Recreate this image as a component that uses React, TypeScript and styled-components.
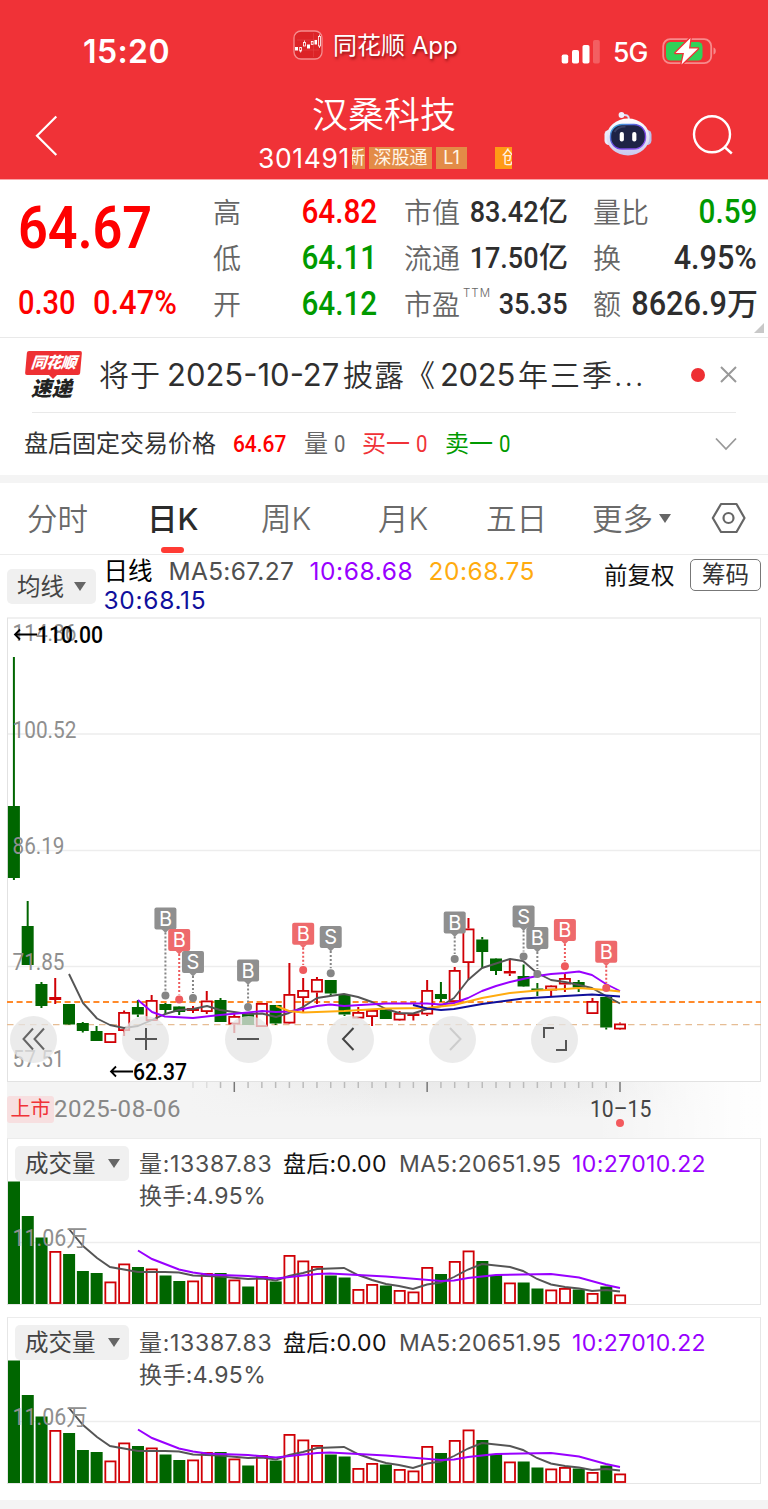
import React from 'react';
import styled, { createGlobalStyle } from 'styled-components';

const UI = `Inter, "Noto Sans CJK SC", sans-serif`;
const DIN = `Roboto, "Noto Sans CJK SC", sans-serif`;
const RED = '#fe0000';
const GREEN = '#009a00';
const PURPLE = '#9900ff';

const Global = createGlobalStyle`
  * { box-sizing: border-box; }
  body { margin: 0; background: #fff; font-family: ${UI}; color: #333; -webkit-font-smoothing: antialiased; }
`;

const Page = styled.div`width: 768px; height: 1509px; overflow: hidden; background: #fff; white-space: nowrap;`;

/* ---------- header ---------- */
const Header = styled.header`height: 180px; background: #f03237; color: #fff; border-bottom: 1px solid #f9a5a7;`;
const StatusBar = styled.div`height: 92px; display: grid; grid-template-columns: 293px 268px 1fr;`;
const Clock = styled.div`padding: 30px 0 0 83px; font: 600 32px/44px ${UI}; letter-spacing: 0.4px;`;
const AppMark = styled.div`padding-top: 29px; height: 60px; display: flex; align-items: center; gap: 10px;`;
const AppName = styled.span`margin-top: 2px; font-size: 24px; line-height: 30px; text-shadow: 1px 2px 3px rgba(90, 0, 0, 0.7);`;
const Signals = styled.div`padding-top: 37px; height: 66px; display: flex; align-items: center;`;
const Network = styled.span`font: 500 26.5px/28px ${UI}; margin: 1px 14px 0 13px; letter-spacing: -0.8px;`;
const NavBar = styled.div`height: 87px; display: grid; grid-template-columns: 258px 254px 92px 1fr;`;
const BackSlot = styled.div`padding: 23px 0 0 35px;`;
const TitleBlock = styled.div`display: flex; flex-direction: column; align-items: center; overflow: hidden;`;
const Title = styled.h1`margin: 2px 2px 0 0; font-weight: 350; font-size: 36px; line-height: 43px;`;
const CodeRow = styled.div`width: 254px; height: 26px; margin-top: 8px; display: flex; align-items: center;`;
const Code = styled.span`width: 94px; font-size: 26.5px; line-height: 26px; letter-spacing: 0.6px;`;
const Tag = styled.span<{ $w: number; $bg?: string; $gap?: number; $align?: string }>`
  width: ${p => p.$w}px; height: 22px; flex: none; margin-left: ${p => p.$gap ?? 4}px;
  display: flex; justify-content: ${p => p.$align ?? 'center'}; overflow: hidden;
  background: ${p => p.$bg ?? '#e38b47'}; font-size: 18px; line-height: 21px; color: #fff5e6;
`;
const TagInset = styled.span`padding-left: 7px;`;
const Actions = styled.div`display: flex; padding-top: 19px;`;
const SearchSlot = styled.div`margin-left: 37.5px; line-height: 0;`;

/* ---------- quote ---------- */
const Quote = styled.section`
  position: relative; height: 158px; border-bottom: 1px solid #e9e9e9;
  display: grid; grid-template-columns: 213px 164px 190px 1fr; 
`;
const Squeeze = styled.span<{ $x?: number; $from?: string }>`
  display: inline-block; transform: scaleX(${p => p.$x ?? 0.9}); transform-origin: ${p => p.$from ?? 'right'} center;
`;
const PriceBlock = styled.div`padding: 16px 0 0 18px; color: ${RED}; font-family: ${DIN};`;
const Price = styled.div`font-weight: 600; font-size: 60px; line-height: 64px;`;
const Change = styled.div`margin-top: 26px; display: flex; font-weight: 500; font-size: 33px; line-height: 34px;`;
const ChangeItem = styled.span<{ $w: number }>`width: ${p => p.$w}px;`;
const Metrics = styled.div<{ $pad?: string }>`padding: ${p => p.$pad ?? '9px 0 0 0'};`;
const Metric = styled.div`height: 46px; display: flex; justify-content: space-between; align-items: center;`;
const Label = styled.span`font-size: 28px; line-height: 46px; padding-top: 2px; color: #666; font-weight: 350;`;
const Sup = styled.sup`font-size: 11.5px; line-height: 10px; vertical-align: 18px; margin-left: 3px; letter-spacing: 1px; color: #666;`;
const Value = styled.span<{ $c?: string; $s?: number }>`
  font-family: ${DIN}; font-weight: 500; font-size: ${p => p.$s ?? 33}px; line-height: 46px; color: ${p => p.$c ?? '#2e2e2e'};
  display: flex; justify-content: flex-end; align-items: baseline;
`;
const Unit = styled.span<{ $s: number }>`font: 500 ${p => p.$s}px/40px "Noto Sans CJK SC", sans-serif; margin-right: -1px;`;
const Corner = styled.i`
  position: absolute; right: 4px; bottom: 4px; border-style: solid; border-width: 0 0 10px 10px; border-color: transparent transparent #c8c8c8;
`;

/* ---------- news ---------- */
const News = styled.section`height: 74px; display: flex; align-items: center; padding-left: 25px;`;
const Brand = styled.div`width: 74px; height: 48px; display: flex; flex-direction: column;`;
const BrandTop = styled.div`
  width: 55px; height: 24px; flex: none; margin-left: 1px; background: #ee3033; border-radius: 2px; transform: skewX(-5deg);
  color: #fff; font-weight: 900; font-size: 15.5px; line-height: 23px; text-align: center; font-style: italic; letter-spacing: -0.4px;
`;
const BrandNotch = styled.i`
  align-self: flex-start; margin-left: 24px; border-style: solid; border-width: 4px 4px 0; border-color: #ee3033 transparent transparent;
`;
const BrandBottom = styled.div`margin: 0 0 0 6px; font-weight: 900; font-style: italic; font-size: 20.5px; line-height: 20px; color: #222;`;
const Headline = styled.div`width: 592px; font-size: 30px; line-height: 43px; color: #2f2f2f; display: flex; align-items: baseline;`;
const Cjk = styled.span<{ $w: number; $ls?: number }>`width: ${p => p.$w}px; letter-spacing: ${p => p.$ls ?? 1}px; font-weight: 350;`;
const Num = styled.span<{ $w: number; $ls?: number }>`width: ${p => p.$w}px; font-size: 31px; letter-spacing: ${p => p.$ls ?? 0}px;`;
const Unread = styled.i`width: 14px; height: 14px; border-radius: 50%; background: #ee2f33;`;
const CloseSlot = styled.div`margin-left: 15px; height: 18px; line-height: 0;`;
const Divider = styled.div`height: 1px; margin: 0 32px; background: #e9e9e9;`;

/* ---------- after-hours ---------- */
const AfterHours = styled.section`height: 62px; display: flex; align-items: center; padding-left: 24px; font-size: 24px;`;
const AHText = styled.span<{ $w: number; $c?: string; $b?: number }>`
  width: ${p => p.$w}px; color: ${p => p.$c ?? '#444'}; font-weight: ${p => p.$b ?? 400}; font-family: ${DIN}; line-height: 36px;
`;
const Gap = styled.div<{ $h?: number }>`height: ${p => p.$h ?? 8}px; background: #f4f4f4;`;

/* ---------- tabs ---------- */
const Tabs = styled.nav`height: 72px; display: flex; border-bottom: 1px solid #ececec; padding-left: 27px;`;
const Tab = styled.div<{ $w: number; $on?: boolean }>`
  position: relative; width: ${p => p.$w}px; height: 71px; font-size: 30.5px; line-height: 71px;
  font-weight: ${p => (p.$on ? 500 : 350)}; color: ${p => (p.$on ? '#2b2b2b' : '#6a6a6a')};
  &::after {
    content: ''; display: ${p => (p.$on ? 'block' : 'none')}; position: absolute; left: 14px; bottom: 1px;
    width: 23px; height: 6px; border-radius: 3px; background: #ff3b34;
  }
`;
const Caret = styled.i<{ $l?: number; $up?: number }>`
  display: inline-block; border-style: solid; border-width: 9px 6px 0; border-color: #666 transparent transparent;
  margin: 0 0 ${p => p.$up ?? 0}px ${p => p.$l ?? 6}px; vertical-align: middle;
`;
const SettingsSlot = styled.div`padding-top: 18px; line-height: 0;`;

/* ---------- indicators ---------- */
const Legend = styled.div`height: 62px; display: flex; padding: 0 7px;`;
const Picker = styled.div<{ $w: number; $mt?: number }>`
  width: ${p => p.$w}px; height: 35px; margin-top: ${p => p.$mt ?? 0}px; border-radius: 5px; background: #f0f0f0; display: flex; align-items: center;
  padding-left: 10px; font-size: 23.5px; line-height: 34px; color: #444;
`;
const LegendLines = styled.div`margin-left: 7.5px; width: 500.5px; font-size: 24.5px; line-height: 29px; padding-top: 2px;`;
const LegendRow = styled.div<{ $h?: number }>`display: flex; height: ${p => p.$h ?? 29}px; align-items: baseline;`;
const Stat = styled.span<{ $w?: number; $c?: string; $ls?: number }>`
  width: ${p => (p.$w ? p.$w + 'px' : 'auto')}; color: ${p => p.$c ?? '#4f4f4f'}; letter-spacing: ${p => p.$ls ?? 0}px;
`;
const Adjust = styled.span`width: 86px; font-size: 23.5px; line-height: 41px; color: #111;`;
const ChipButton = styled.div`
  width: 71px; height: 32px; margin-top: 4px; border: 1.5px solid #777; border-radius: 5px; font-size: 23.5px; line-height: 29px; text-align: center; color: #333;
`;

/* ---------- charts ---------- */
const ChartWrap = styled.div`position: relative; height: 465px;`;
const Plot = styled.svg`display: block;`;
const Controls = styled.div`position: absolute; left: 10px; bottom: 19.5px; display: flex; gap: 55.3px;`;
const Control = styled.div<{ $first?: boolean }>`
  width: 47px; height: 47px; border-radius: 50%; background: rgba(229, 229, 229, 0.76); margin-right: ${p => (p.$first ? 10 : 0)}px;
  display: flex; align-items: center; justify-content: center;
`;
const Axis = styled.div`
  height: 56px; margin: 0 7px 0 7px;
  background:
    linear-gradient(90deg, rgba(255,255,255,0) 78%, rgba(255,255,255,.9) 98%),
    linear-gradient(90deg, #f4f4f4 24%, rgba(244,244,244,0) 50%, rgba(244,244,244,0) 70%, #f4f4f4 95%),
    linear-gradient(180deg, #eaeaea, #f4f4f4 65%);
`;
const AxisLabels = styled.div`display: flex; height: 28px; align-items: center;`;
const ListedTag = styled.span`
  width: 47px; height: 27px; border-radius: 3px; background: #f7dfe0; color: #f03237; font-size: 20px; line-height: 26px; text-align: center;
`;
const DateText = styled.span<{ $w: number; $c: string; $ls?: number }>`
  width: ${p => p.$w}px; font-family: ${DIN}; font-size: 24px; line-height: 28px; color: ${p => p.$c}; letter-spacing: ${p => p.$ls ?? 0}px;
`;
const AxisDot = styled.i`display: block; width: 8px; height: 8px; border-radius: 50%; background: #f35a5e; margin: -4px 0 0 609px;`;

const VolumePanel = styled.section<{ $mb: number }>`
  position: relative; height: 167px; margin: 0 7px ${p => p.$mb}px; border: 1px solid #e6e6e6; border-top-color: #ececec;
`;
const VolumeHead = styled.div`position: relative; z-index: 1; display: flex; padding: 7px 0 0 7px;`;
const VolumeStats = styled.div`margin-left: 10px; font-size: 23px; line-height: 28px; padding-top: 4px;`;
const VolumePlot = styled.svg`position: absolute; left: -8px; top: -1px;`;

type Candle = [0 | 1, number, number, number, number];
/* [rising, body top, body bottom, high, low] in page coordinates */
const candles: Candle[] = [
  [0, 806, 878, 657, 880], [0, 926, 965, 901, 965], [0, 984, 1006, 982, 1008], [1, 997, 1000, 978, 1004],
  [0, 1004, 1024.5, 1004, 1024], [0, 1023, 1031, 1022, 1032.5], [0, 1031, 1041, 1026, 1041], [1, 1033, 1043, 1033, 1043],
  [1, 1012, 1031, 1010.5, 1036], [0, 1007, 1014.5, 1000, 1017], [1, 1000, 1021, 995, 1021], [0, 1004, 1010, 1003, 1014],
  [0, 1006.5, 1012, 1006, 1015], [1, 1008, 1011, 1006, 1013], [1, 1000.5, 1012, 991, 1014], [0, 1000, 1022, 998, 1022],
  [1, 1016, 1024.5, 1014, 1033], [0, 1014, 1025, 1014, 1025], [1, 1003, 1027, 1003, 1027], [0, 1005, 1023.5, 1005, 1025],
  [1, 994, 1023.5, 963, 1023], [1, 990, 998, 978, 1012], [1, 979, 992.5, 977, 1004], [0, 980, 993.5, 980, 996],
  [0, 995, 1014.5, 995, 1016], [1, 1012, 1018.5, 1007, 1018], [1, 1010, 1017, 1010, 1026], [0, 1009.5, 1019, 1009, 1019],
  [1, 1013, 1020.5, 1011, 1020], [1, 1013.5, 1016, 1013, 1020.5], [1, 990, 1014.5, 980, 1016], [0, 994, 999, 982, 1002],
  [1, 970, 1002, 967, 1002], [1, 928.5, 963, 918, 980], [0, 939.5, 952, 937, 968], [0, 958.5, 971, 958, 975],
  [1, 971, 973.5, 959, 976], [0, 976, 986.5, 964.5, 986], [0, 988.5, 990.5, 983, 996], [1, 985.5, 990.5, 985, 997],
  [1, 978, 984.5, 974, 992], [0, 982, 987.5, 980, 992], [1, 1001, 1014, 998, 1014], [0, 997, 1027.5, 997, 1029.5],
  [1, 1023.5, 1029.5, 1022.5, 1029],
];
const STEP = 13.775;
const cx = (i: number) => 13.9 + i * STEP;
const UP = '#d00006';
const DOWN = '#006600';

const ma5 = '69,974 83,1003 97,1018.5 110,1025 124,1028 138,1026 152,1020 165,1014 179,1010 193,1009 207,1006 220,1010 234,1012 248,1014 262,1013.5 276,1017 289,1013 303,1007 317,998 330,996 344,994 358,997 372,1002 386,1009 399,1013 413,1013.5 427,1009 441,1006 454,998 468,980 482,968 496,963.5 510,959 523,961 537,973 551,980 565,982 579,985 592,988 606,996 620,1003.5';
const ma10 = '138,1000 152,1012 165,1016.5 193,1018 220,1015 248,1012.5 262,1011 276,1012 289,1011.5 303,1009 317,1006 330,1004.5 344,1006 386,1003.5 427,1003.5 441,1004.5 454,1003 468,998 482,991 496,986 510,982 523,979 537,976 551,974 565,973 579,971.5 592,975 606,984 620,991';
const ma20 = '276,1006 289,1011 303,1012.5 344,1011 386,1008.5 427,1008 454,1005 482,998 510,993 537,990.5 565,989 579,988 606,990 620,991.5';
const ma30 = '413,1005 427,1008.5 441,1010 454,1009 482,1004 523,998.5 565,996 592,994.5 620,996.5';

type Flag = [number, number, number, 'B' | 'S', boolean];
/* [candle index, box top, dot y, letter, highlighted] */
const flags: Flag[] = [
  [11, 907.5, 995.5, 'B', false], [12, 929, 999.5, 'B', true], [13, 951, 998, 'S', false], [17, 959.5, 1007, 'B', false],
  [21, 922.7, 970, 'B', true], [23, 926, 973.3, 'S', false], [32, 911.5, 959, 'B', false], [38, 927, 974, 'B', false],
  [37, 905.5, 956.5, 'S', false], [40, 919, 966.3, 'B', true], [43, 940.7, 988, 'B', true],
];

const FlagMark = ({ flag }: { flag: Flag }) => {
  const [i, top, dot, letter, hot] = flag;
  const x = cx(i);
  const fill = hot ? '#ee6a6c' : '#8f8f8f';
  const ink = hot ? '#ee5a5d' : '#858585';
  return (
    <g>
      <line x1={x} x2={x} y1={top + 25} y2={dot - 5} stroke={ink} strokeWidth="2" strokeDasharray="2 2" />
      <circle cx={x} cy={dot} r="4" fill={ink} />
      <rect x={x - 11} y={top} width="22" height="22" rx="2" fill={fill} />
      <path d={`M${x - 4} ${top + 21.5}h8l-4 4z`} fill={fill} />
      <text x={x} y={top + 18} fontSize="20" fill="#fff" textAnchor="middle" fontFamily="Inter" fontWeight="400">{letter}</text>
    </g>
  );
};

const PriceLabel = ({ y, text }: { y: number; text: string }) => (
  <text x="12.500" y={y} fontSize="24" fill="#8f8f8f" fontFamily="Roboto" fontWeight="400" textLength={text.length > 5 ? 64 : 52} lengthAdjust="spacingAndGlyphs">{text}</text>
);

const PriceChart = () => (
  <Plot width="768" height="465" viewBox="0 617 768 465">
    <rect x="7.5" y="618" width="753" height="463.5" fill="#fff" stroke="#e2e2e2" />
    {[734, 850.5, 966.5].map(y => <line key={y} x1="8" x2="760" y1={y} y2={y} stroke="#ededed" strokeWidth="1.4" />)}
    <line x1="7" x2="761" y1="1002" y2="1002" stroke="#ff8a2a" strokeWidth="2" strokeDasharray="6 3.6" />
    <line x1="7" x2="761" y1="1024.6" y2="1024.6" stroke="#e6bd94" strokeWidth="1.3" strokeDasharray="6.5 5" />
    {candles.map(([up, t, b, h, l], i) => {
      const x = cx(i);
      const c = up ? UP : DOWN;
      const solid = !up || b - t < 4;
      return (
        <g key={i}>
          <line x1={x} x2={x} y1={h} y2={t} stroke={c} strokeWidth="2" />
          <line x1={x} x2={x} y1={b} y2={l} stroke={c} strokeWidth="2" />
          {solid
            ? <rect x={x - 6} y={t} width="12" height={b - t} fill={c} />
            : <rect x={x - 5.1} y={t + 0.9} width="10.2" height={b - t - 1.8} fill="#fff" stroke={c} strokeWidth="1.8" />}
        </g>
      );
    })}
    <g fill="none" strokeWidth="1.9" strokeLinejoin="round">
      <polyline points={ma5} stroke="#555" />
      <polyline points={ma10} stroke={PURPLE} />
      <polyline points={ma20} stroke="#ffab0f" />
      <polyline points={ma30} stroke="#10109c" />
    </g>
    {flags.map(f => <FlagMark key={f[0]} flag={f} />)}
    <PriceLabel y={641} text="114.86" />
    <PriceLabel y={738} text="100.52" />
    <PriceLabel y={854} text="86.19" />
    <PriceLabel y={970} text="71.85" />
    <PriceLabel y={1066.5} text="57.51" />
    <g stroke="#000" strokeWidth="1.8" fill="none">
      <path d="M15 634.5h22M20 629.500l-5 5 5 5" />
      <path d="M111 1071.500h22M116 1066.500l-5 5 5 5" />
    </g>
    <g fontFamily="Roboto" fontWeight="500" fontSize="23.500" fill="#000">
      <text x="37" y="643" textLength="66" lengthAdjust="spacingAndGlyphs">110.00</text>
      <text x="133" y="1080" textLength="54" lengthAdjust="spacingAndGlyphs">62.37</text>
    </g>
  </Plot>
);

const AxisTicks = () => (
  <Plot width="754" height="13" viewBox="7 0 754 13">
    {Array.from({ length: 32 }, (_, k) => k + 13).map(i => {
      const major = i === 16 || i === 30 || i === 44;
      return <line key={i} x1={cx(i)} x2={cx(i)} y1="0" y2={major ? 10 : 6} stroke={major ? '#777' : i < 15 ? '#ddd' : '#bbb'} strokeWidth="1.500" />;
    })}
  </Plot>
);

const volumeTops = [
  1181.5, 1216, 1237.5, 1251, 1254, 1271, 1273, 1281.5, 1263.5, 1267, 1268.5, 1275.5, 1281, 1280.5, 1273, 1273, 1279.5, 1286.5,
  1276, 1281.5, 1255, 1260.5, 1266, 1275.5, 1277.5, 1289, 1284, 1285.5, 1290, 1291.5, 1267, 1274, 1261, 1250.5, 1261, 1275,
  1282.5, 1282.5, 1288.5, 1289.5, 1288, 1289.5, 1293, 1286.5, 1294.5,
];
const vma5 = '69,1229 83,1246 97,1258 110,1267 124,1269.5 138,1272 165,1272 179,1272.5 193,1275.5 220,1276.5 248,1279 262,1278.5 276,1280.5 289,1276 303,1273 317,1269 344,1268 358,1275 372,1280 386,1284 399,1286 413,1289 427,1284.5 441,1282.5 454,1277 468,1269.5 482,1264 510,1267 523,1271 537,1279 551,1284.5 565,1287 579,1288.5 592,1291 606,1290 620,1291.5';
const vma10 = '138,1250.5 152,1259 179,1269.5 193,1272.5 207,1274.5 248,1276 276,1278.5 317,1274 330,1273.5 386,1276.5 441,1281 454,1280.5 468,1278 496,1275 551,1274 579,1277.5 606,1285 620,1288';

const Volume = ({ gap }: { gap: number }) => (
  <VolumePanel $mb={gap}>
    <VolumePlot width="768" height="167" viewBox="0 1138 768 167">
      <line x1="8" x2="760" y1="1242.500" y2="1242.500" stroke="#ededed" strokeWidth="1.4" />
      {volumeTops.map((t, i) => {
        const x = cx(i);
        return candles[i][0]
          ? <rect key={i} x={x - 5} y={t + 0.9} width="10.200" height={1303 - t - 0.9} fill="#fff" stroke={UP} strokeWidth="1.800" />
          : <rect key={i} x={x - 5.9} y={t} width="12" height={1304 - t} fill={DOWN} />;
      })}
      <polyline points={vma5} fill="none" stroke="#555" strokeWidth="1.900" />
      <polyline points={vma10} fill="none" stroke={PURPLE} strokeWidth="2" />
      <text x="12.500" y="1246" fontSize="23" fill="#8f8f8f" fontFamily={`Roboto, "Noto Sans CJK SC", sans-serif`} fontWeight="400" textLength="75" lengthAdjust="spacingAndGlyphs">11.06万</text>
    </VolumePlot>
    <VolumeHead>
      <Picker $w={114}>成交量<Caret $l={12} /></Picker>
      <VolumeStats>
        <LegendRow $h={32}>
          <Stat $w={144} $ls={0.7}>量:13387.83</Stat>
          <Stat $w={116} $c="#111" $ls={0.3}>盘后:0.00</Stat>
          <Stat $w={173} $ls={0.35}>MA5:20651.95</Stat>
          <Stat $c={PURPLE} $ls={0.4}>10:27010.22</Stat>
        </LegendRow>
        <LegendRow $h={31}><Stat $ls={0.4}>换手:4.95%</Stat></LegendRow>
      </VolumeStats>
    </VolumeHead>
  </VolumePanel>
);

const AppIcon = () => (
  <svg width="30" height="30" viewBox="0 0 30 30">
    <rect x="1" y="1" width="28" height="28" rx="7" fill="#dc2327" stroke="#f58d8f" strokeWidth="1.300" />
    <path d="M4 10h22M4 20h22M20.500 3v24" stroke="#e9494c" strokeWidth=".5" />
    <g fill="#fff"><rect x="2" y="17" width="3" height="3.500" /><rect x="14" y="14.500" width="3" height="4" /><rect x="21.500" y="10" width="2.500" height="4.500" /></g>
    <g fill="none" stroke="#fff" strokeWidth=".8"><rect x="6.700" y="17.500" width="1.800" height="3.500" /><rect x="10.500" y="12.500" width="2" height="3.500" /><path d="M11.500 10.500v2M7.600 21v1.500" /><rect x="18.300" y="11.500" width="1.800" height="3" /><rect x="25.500" y="6.500" width="2" height="9.500" /><path d="M26.500 4.500v2M26.500 16v2" /></g>
  </svg>
);

const Battery = () => (
  <svg width="56" height="30" viewBox="0 0 56 30">
    <rect x="1.200" y="2.200" width="48" height="24" rx="7" fill="none" stroke="#f78a8c" strokeWidth="1.800" />
    <path d="M51.500 10.500c3 .8 3 6.200 0 7z" fill="#f78a8c" />
    <rect x="4" y="5" width="36.500" height="18.500" rx="4.500" fill="#30d158" />
    <path d="M28.500 1L13.500 16h8.500l-2.500 11.500L36 11.500h-9z" fill="#fff" stroke="#f03237" strokeWidth="2.600" strokeLinejoin="round" paintOrder="stroke" />
  </svg>
);

const Robot = () => (
  <svg width="50" height="48" viewBox="0 0 50 48">
    <defs>
      <linearGradient id="shell" x1="0" y1="0" x2="0" y2="1"><stop offset="0" stopColor="#fff" /><stop offset="1" stopColor="#c9c9ee" /></linearGradient>
      <linearGradient id="rim" x1="0" y1="0" x2="1" y2="1"><stop offset="0" stopColor="#35b8d8" /><stop offset=".5" stopColor="#6b3fe0" /><stop offset="1" stopColor="#9a60f5" /></linearGradient>
    </defs>
    <path d="M25 9c0-4.500-2-5.500-7-5" fill="none" stroke="#dcdcf3" strokeWidth="2" />
    <circle cx="17.500" cy="4" r="2.900" fill="#f0f0ff" />
    <rect x="0.500" y="19" width="9" height="15" rx="4.500" fill="#ececfb" />
    <rect x="38.500" y="19" width="9" height="15" rx="4.500" fill="#bcc0ea" />
    <ellipse cx="24" cy="26" rx="21.500" ry="18.500" fill="url(#shell)" />
    <rect x="6.500" y="13.500" width="35" height="24.500" rx="11.500" fill="#1e2345" stroke="url(#rim)" strokeWidth="1.400" />
    <path d="M10.500 21q3-5.500 11-5.500" stroke="#3a4066" strokeWidth="2" fill="none" />
    <rect x="15.700" y="21" width="4.200" height="9.500" rx="2" fill="#fff" /><rect x="28.200" y="21" width="4.200" height="9.500" rx="2" fill="#fff" />
  </svg>
);

export default function App() {
  return (
    <Page>
      <Global />
      <Header>
        <StatusBar>
          <Clock>15:20</Clock>
          <AppMark><AppIcon /><AppName>同花顺 App</AppName></AppMark>
          <Signals>
            <svg width="39" height="25" viewBox="0 0 39 25" fill="#fff">
              <rect x="0.700" y="15.500" width="6.500" height="9" rx="1.800" /><rect x="11" y="11" width="7" height="13.500" rx="1.800" />
              <rect x="21.500" y="6" width="7" height="18.500" rx="1.800" /><rect x="32" y="1" width="6.800" height="23.500" rx="1.800" opacity=".22" />
            </svg>
            <Network>5G</Network>
            <Battery />
          </Signals>
        </StatusBar>
        <NavBar>
          <BackSlot>
            <svg width="24" height="42" viewBox="0 0 24 42" fill="none" stroke="#fff" strokeWidth="2.200"><path d="M21.300 1.500L2 20.700 21.300 40" /></svg>
          </BackSlot>
          <TitleBlock>
            <Title>汉桑科技</Title>
            <CodeRow>
              <Code>301491</Code>
              <Tag $w={13} $gap={0} $align="flex-end">新</Tag>
              <Tag $w={63}>深股通</Tag>
              <Tag $w={31}>L1</Tag>
              <Tag $w={17} $gap={28} $bg="#ff9a16" $align="flex-start"><TagInset>创</TagInset></Tag>
            </CodeRow>
          </TitleBlock>
          <span />
          <Actions>
            <Robot />
            <SearchSlot>
              <svg width="44" height="44" viewBox="0 0 44 44" fill="none" stroke="#fff" strokeWidth="2.400">
                <circle cx="20" cy="23.300" r="18" /><path d="M32 35.500l7.800 7" />
              </svg>
            </SearchSlot>
          </Actions>
        </NavBar>
      </Header>

      <Quote>
        <PriceBlock>
          <Price><Squeeze $x={0.87} $from="left">64.67</Squeeze></Price>
          <Change>
            <ChangeItem $w={75}><Squeeze $x={0.88} $from="left">0.30</Squeeze></ChangeItem>
            <ChangeItem $w={90}><Squeeze $x={0.935} $from="left">0.47%</Squeeze></ChangeItem>
          </Change>
        </PriceBlock>
        <Metrics>
          <Metric><Label>高</Label><Value $c={RED}><Squeeze>64.82</Squeeze></Value></Metric>
          <Metric><Label>低</Label><Value $c={GREEN}><Squeeze>64.11</Squeeze></Value></Metric>
          <Metric><Label>开</Label><Value $c={GREEN}><Squeeze>64.12</Squeeze></Value></Metric>
        </Metrics>
        <Metrics $pad="9px 0 0 27px">
          <Metric><Label>市值</Label><Value $s={30}><Squeeze>83.42</Squeeze><Unit $s={29}>亿</Unit></Value></Metric>
          <Metric><Label>流通</Label><Value $s={30}><Squeeze>17.50</Squeeze><Unit $s={29}>亿</Unit></Value></Metric>
          <Metric><Label>市盈<Sup>TTM</Sup></Label><Value $s={30}><Squeeze>35.35</Squeeze></Value></Metric>
        </Metrics>
        <Metrics $pad="9px 11px 0 26px">
          <Metric><Label>量比</Label><Value $c={GREEN}><Squeeze>0.59</Squeeze></Value></Metric>
          <Metric><Label>换</Label><Value><Squeeze $x={0.925}>4.95%</Squeeze></Value></Metric>
          <Metric><Label>额</Label><Value><Squeeze $x={0.93}>8626.9</Squeeze><Unit $s={31}>万</Unit></Value></Metric>
        </Metrics>
        <Corner />
      </Quote>

      <News>
        <Brand><BrandTop>同花顺</BrandTop><BrandNotch /><BrandBottom>速递</BrandBottom></Brand>
        <Headline>
          <Cjk $w={68}>将于</Cjk><Num $w={176}>2025-10-27</Num><Cjk $w={97}>披露《</Cjk><Num $w={78} $ls={-0.3}>2025</Num><Cjk $w={130} $ls={2}>年三季...</Cjk>
        </Headline>
        <Unread />
        <CloseSlot><svg width="17" height="17" viewBox="0 0 17 17" stroke="#999" strokeWidth="2"><path d="M1 1l15 15M16 1L1 16" /></svg></CloseSlot>
      </News>
      <Divider />
      <AfterHours>
        <AHText $w={209} $c="#333">盘后固定交易价格</AHText>
        <AHText $w={71} $c={RED} $b={500}><Squeeze $x={0.87} $from="left">64.67</Squeeze></AHText>
        <AHText $w={58} $c="#666">量 <Squeeze $x={0.85} $from="left">0</Squeeze></AHText>
        <AHText $w={83} $c="#f03237">买一 <Squeeze $x={0.85} $from="left">0</Squeeze></AHText>
        <AHText $w={270} $c={GREEN}>卖一 <Squeeze $x={0.85} $from="left">0</Squeeze></AHText>
        <svg width="22" height="14" viewBox="0 0 22 14" fill="none" stroke="#999" strokeWidth="1.800"><path d="M1 1.500l10 10.500 10-10.500" /></svg>
      </AfterHours>
      <Gap />
      <Tabs>
        <Tab $w={120}>分时</Tab>
        <Tab $w={114} $on>日K</Tab>
        <Tab $w={117}>周K</Tab>
        <Tab $w={108}>月K</Tab>
        <Tab $w={106}>五日</Tab>
        <Tab $w={119}>更多<Caret $up={6} /></Tab>
        <SettingsSlot>
          <svg width="36" height="34" viewBox="0 0 36 34" fill="none" stroke="#666" strokeWidth="2.200">
            <path d="M10 3h15.500l8 14-8 14H10L1.800 17z" strokeLinejoin="round" /><circle cx="17.500" cy="17" r="5" />
          </svg>
        </SettingsSlot>
      </Tabs>

      <Legend>
        <Picker $w={89} $mt={14}>均线<Caret $l={10} /></Picker>
        <LegendLines>
          <LegendRow>
            <Stat $w={65} $c="#000">日线</Stat>
            <Stat $w={141} $ls={0.3}>MA5:67.27</Stat>
            <Stat $w={119} $c={PURPLE} $ls={0.6}>10:68.68</Stat>
            <Stat $c="#ffab0f" $ls={0.5}>20:68.75</Stat>
          </LegendRow>
          <LegendRow><Stat $c="#10109c" $ls={0.7}>30:68.15</Stat></LegendRow>
        </LegendLines>
        <Adjust>前复权</Adjust>
        <ChipButton>筹码</ChipButton>
      </Legend>

      <ChartWrap>
        <PriceChart />
        <Controls>
          <Control $first><svg width="24" height="24" viewBox="0 0 24 24" fill="none" stroke="#666" strokeWidth="2"><path d="M11 1.500L1.500 12 11 22.500M22 1.500L12.500 12 22 22.500" /></svg></Control>
          <Control><svg width="24" height="24" viewBox="0 0 24 24" stroke="#555" strokeWidth="2"><path d="M1 12h22M12 1v22" /></svg></Control>
          <Control><svg width="24" height="24" viewBox="0 0 24 24" stroke="#555" strokeWidth="2"><path d="M1 12h22" /></svg></Control>
          <Control><svg width="24" height="24" viewBox="0 0 24 24" fill="none" stroke="#444" strokeWidth="2"><path d="M15.500 1L5 12l10.500 11" /></svg></Control>
          <Control><svg width="24" height="24" viewBox="0 0 24 24" fill="none" stroke="#ccc" strokeWidth="2"><path d="M9 1l10.500 11L9 23" /></svg></Control>
          <Control><svg width="26" height="26" viewBox="0 0 26 26" fill="none" stroke="#555" strokeWidth="2"><path d="M2 12V2h10M14 24h10V14" /></svg></Control>
        </Controls>
      </ChartWrap>
      <Axis>
        <AxisTicks />
        <AxisLabels>
          <ListedTag>上市</ListedTag>
          <DateText $w={536} $c="#888" $ls={0.6}>2025-08-06</DateText>
          <DateText $w={70} $c="#444"><Squeeze $x={0.88} $from="left">10–15</Squeeze></DateText>
        </AxisLabels>
        <AxisDot />
      </Axis>
      <Volume gap={12} />
      <Volume gap={16} />
      <Gap $h={9} />
    </Page>
  );
}
